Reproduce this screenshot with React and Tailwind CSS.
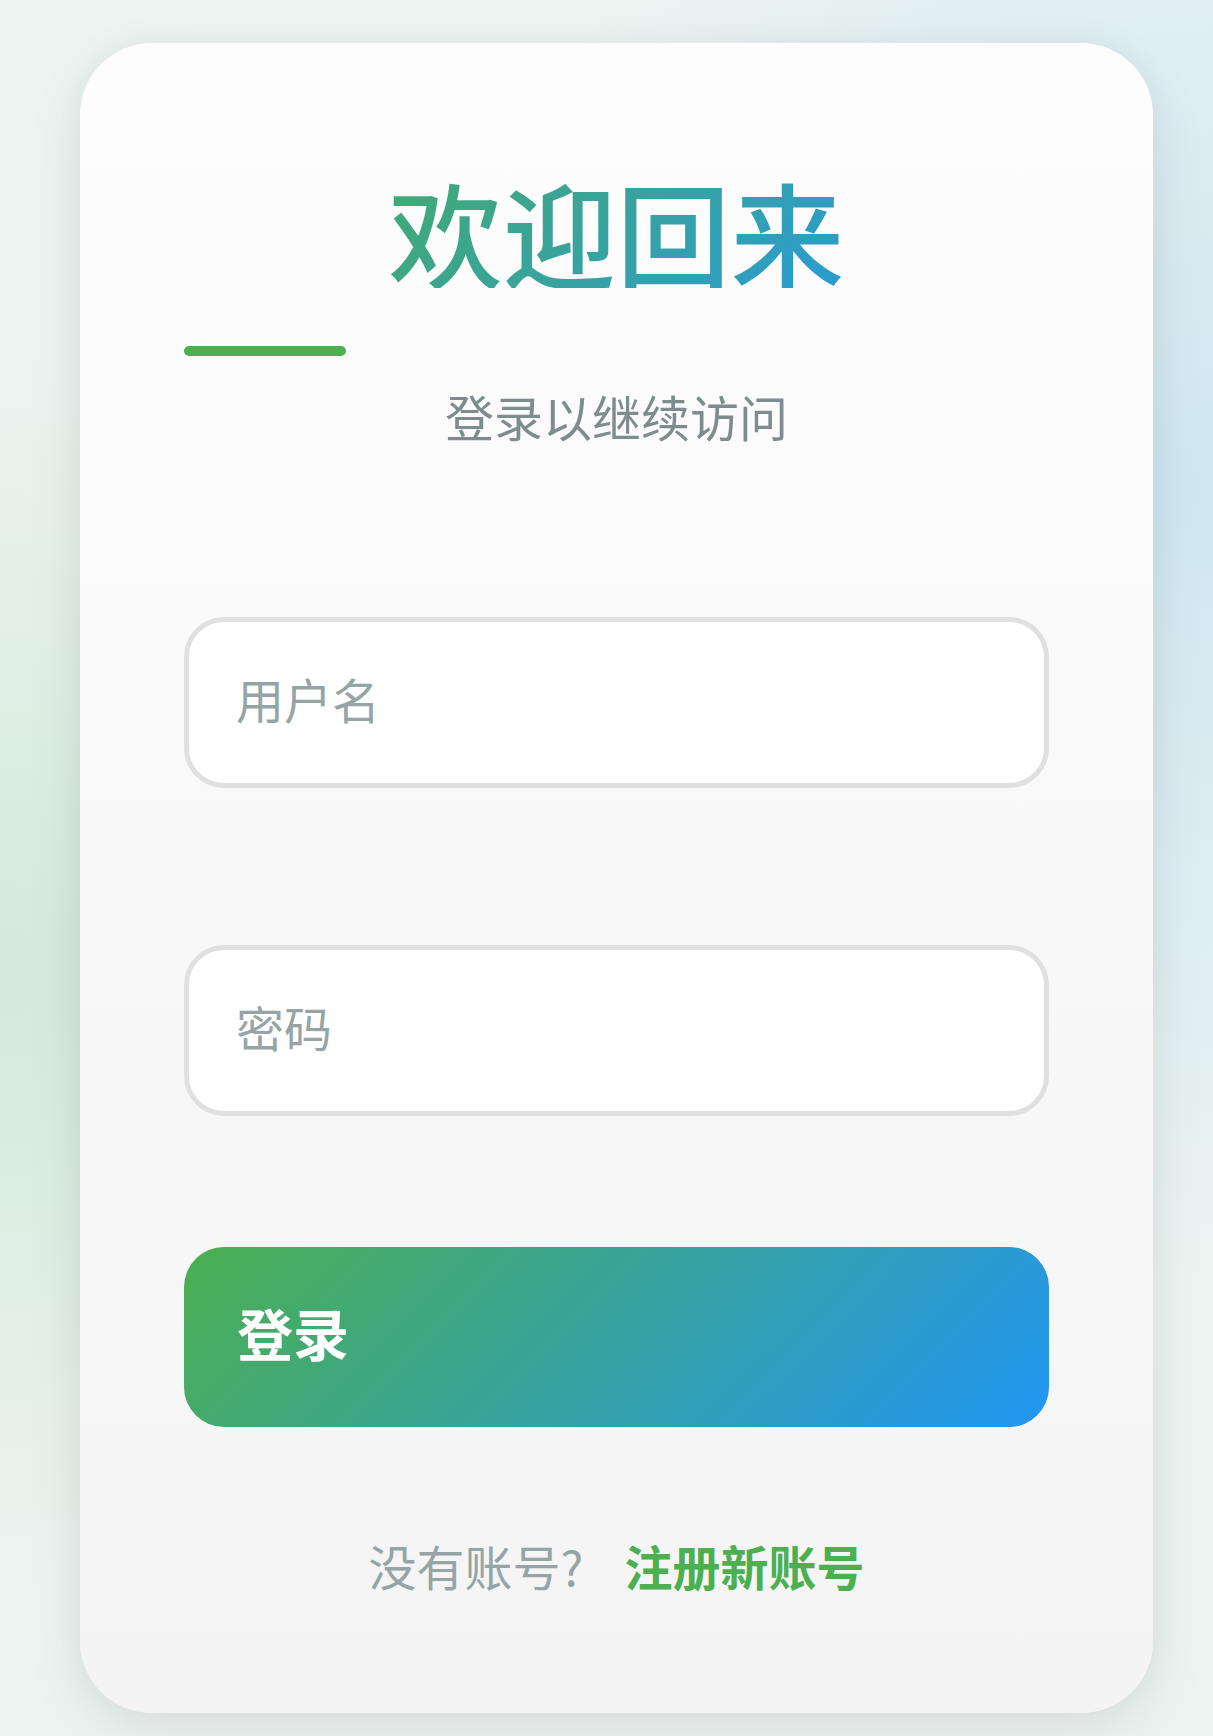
import React from 'react';

export default function App() {
  return (
    <div className="min-h-[1736px] w-full bg-[#ecf4f1] bg-[radial-gradient(ellipse_at_0%_56%,rgba(76,175,80,0.15),transparent_45%),radial-gradient(ellipse_at_100%_28%,rgba(33,150,243,0.14),transparent_45%)] pt-[43px] font-['Noto_Sans_CJK_SC',sans-serif]">
      {/* Login card */}
      <div className="ml-[80px] w-[1073px] h-[1670px] rounded-[72px] bg-[linear-gradient(180deg,#fdfdfd,#f4f4f4)] shadow-[0_20px_60px_rgba(0,0,0,0.08),0_0_30px_rgba(0,0,0,0.04)] px-[104px] pt-[104px] flex flex-col">
        <h1 className="mt-[27px] text-center text-[114px] font-medium leading-none bg-[linear-gradient(135deg,#4caf50,#2196f3)] bg-clip-text text-transparent">
          欢迎回来
        </h1>
        <div className="mt-[58px] w-[162px] h-[10px] rounded-full bg-[#4caf50]" />
        <p className="mt-[35px] text-center text-[49px] leading-none text-[#7f8c8d]">登录以继续访问</p>

        {/* Form */}
        <form className="flex flex-col" onSubmit={(e) => e.preventDefault()}>
          <input
            type="text"
            placeholder="用户名"
            className="mt-[177px] w-full h-[171px] rounded-[40px] border-[5px] border-[#e0e0e0] bg-white px-[47px] pb-[10px] text-[48px] text-[#2c3e50] placeholder:text-[#95a5a6] outline-none"
          />
          <input
            type="password"
            placeholder="密码"
            className="mt-[157px] w-full h-[171px] rounded-[40px] border-[5px] border-[#e0e0e0] bg-white px-[47px] pb-[10px] text-[48px] text-[#2c3e50] placeholder:text-[#95a5a6] outline-none"
          />
          <button
            type="submit"
            className="mt-[131px] w-full h-[180px] rounded-[40px] bg-[linear-gradient(135deg,#4caf50,#2196f3)] px-[53px] pb-[10px] text-left text-[56px] font-bold text-white"
          >
            登录
          </button>
        </form>

        <p className="mt-[114px] text-center text-[48px] leading-none text-[#95a5a6]">
          没有账号?
          <a href="#" className="ml-[41px] font-bold text-[#4caf50]">注册新账号</a>
        </p>
      </div>
    </div>
  );
}
